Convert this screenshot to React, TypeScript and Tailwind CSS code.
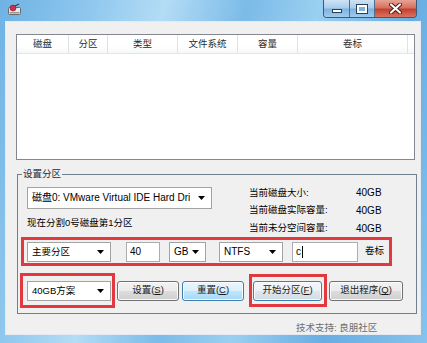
const font = "font-['Liberation_Sans','Noto_Sans_CJK_SC',sans-serif]"

function Arrow() {
  return (
    <svg width="7" height="4" viewBox="0 0 7 4" className="shrink-0">
      <polygon points="0,0 7,0 3.5,4" fill="#000" />
    </svg>
  )
}

function Combo({ text, className }: { text: string; className: string }) {
  return (
    <div className={`flex items-center justify-between bg-white border border-[#a3a3a3] pl-[4px] pr-[6px] overflow-hidden whitespace-nowrap ${className}`}>
      <span className="leading-none">{text}</span>
      <Arrow />
    </div>
  )
}

function Edit({ children, className }: { children: React.ReactNode; className: string }) {
  return (
    <div className={`flex items-center bg-white border border-[#abadb3] pl-[3px] h-[20px] ${className}`}>
      {children}
    </div>
  )
}

function Btn({ label, k, kind = 'normal', className }: { label: string; k: string; kind?: string; className: string }) {
  const look = {
    normal: 'border-[#707070] bg-[linear-gradient(#f2f2f2_0%,#ebebeb_50%,#dddddd_51%,#cfcfcf_100%)]',
    focus: 'border-[#3c7fb1] bg-[linear-gradient(#eaf6fd_0%,#d9f0fc_50%,#bee6fd_51%,#a7d9f5_100%)]',
    def: 'border-[#3c7fb1] bg-[linear-gradient(#f4f8fb_0%,#ecf1f5_50%,#dfe6ec_51%,#d3dce4_100%)]',
  }[kind]
  return (
    <div className={`flex items-center justify-center h-[20px] rounded-[3px] border shadow-[inset_0_0_0_1px_#fbfbfb] text-[#1a1a1a] ${look} ${className}`}>
      {label}(<u>{k}</u>)
    </div>
  )
}

function Caption() {
  return (
    <div className="flex h-[18px] mr-[10px] rounded-b-[4px] border border-t-0 border-[#3b5a78] overflow-hidden">
      <div className="w-[26px] flex items-end justify-center pb-[4px] border-r border-[#4d6e8e] bg-[linear-gradient(#cfe3f4_0%,#a9cdec_45%,#7fb3df_55%,#9fcbef_100%)]">
        <div className="w-[10px] h-[4px] bg-white border border-[#2d3f55]" />
      </div>
      <div className="w-[25px] flex items-center justify-center border-r border-[#4d6e8e] bg-[linear-gradient(#cfe3f4_0%,#a9cdec_45%,#7fb3df_55%,#9fcbef_100%)]">
        <div className="w-[10px] h-[8px] border-[2px] border-white outline outline-1 outline-[#2d3f55] bg-[#7fb3df]" />
      </div>
      <div className="w-[41px] flex items-center justify-center bg-[linear-gradient(#e8a395_0%,#d7715f_45%,#c2412f_55%,#d9735f_100%)]">
        <svg width="13" height="11" viewBox="0 0 13 11">
          <path d="M2 1.5 L11 9.5 M11 1.5 L2 9.5" stroke="#4a1a14" strokeWidth="4" strokeLinecap="round" />
          <path d="M2 1.5 L11 9.5 M11 1.5 L2 9.5" stroke="#fff" strokeWidth="2.2" strokeLinecap="round" />
        </svg>
      </div>
    </div>
  )
}

const columns = [
  { t: '磁盘', w: 'w-[52px]' },
  { t: '分区', w: 'w-[39px]' },
  { t: '类型', w: 'w-[70px]' },
  { t: '文件系统', w: 'w-[60px]' },
  { t: '容量', w: 'w-[60px]' },
  { t: '卷标', w: 'w-[110px]' },
]

const info = [
  ['当前磁盘大小:', '40GB'],
  ['当前磁盘实际容量:', '40GB'],
  ['当前未分空间容量:', '40GB'],
]

export default function App() {
  return (
    <div className={`w-[427px] h-[343px] flex flex-col overflow-hidden text-[9.5px] text-black ${font} bg-[linear-gradient(105deg,#6eb2e4_0%,#8fc8ee_18%,#b4dcf5_32%,#7bbbe8_48%,#9ad0f1_62%,#69ade2_80%,#86c2ec_100%)]`}>
      {/* title bar */}
      <div className="h-[21px] flex items-start justify-between shrink-0">
        <div className="ml-[8px] mt-[3px]">
          <svg width="13" height="13" viewBox="0 0 13 13">
            <rect x="0.5" y="4.5" width="12" height="7" rx="1" fill="#e8e8e8" stroke="#6a6a6a" />
            <rect x="1.5" y="9" width="10" height="1.5" fill="#9a9a9a" />
            <circle cx="5" cy="5" r="3" fill="#c8324a" stroke="#7a1a28" strokeWidth="0.6" />
            <path d="M7 3 L11 1" stroke="#3a3a3a" strokeWidth="1.2" />
          </svg>
        </div>
        <Caption />
      </div>

      {/* client area */}
      <div className="flex-1 ml-[5px] mr-[6px] mb-[8px] bg-[#f0f0f0] border border-[#e4eaf0] flex flex-col">
        {/* list view */}
        <div className="mt-[12px] ml-[10px] w-[399px] h-[126px] bg-white border border-[#828790] flex flex-col">
          <div className="h-[19px] flex border-b border-[#e5e5e5] bg-[linear-gradient(#ffffff_0%,#ffffff_60%,#f5f7f9_100%)] text-[#2b2b2b]">
            {columns.map(c => (
              <div key={c.t} className={`${c.w} shrink-0 flex items-center justify-center border-r border-[#dfe3e8]`}>
                {c.t}
              </div>
            ))}
          </div>
        </div>

        {/* group box */}
        <div className="relative mt-[14px] ml-[11px] w-[400px] h-[140px] border border-[#6f7f8c] flex flex-col">
          <div className="absolute left-[4px] top-[-7px] px-[1px] bg-[#f0f0f0] leading-[12px] text-[#1a2a3a]">设置分区</div>

          <div className="mt-[9px] ml-[9px] h-[53px] flex">
            <div className="w-[185px] flex flex-col">
              <Combo text="磁盘0: VMware Virtual IDE Hard Dri" className="mt-[3px] h-[22px] w-[185px] text-[10px]" />
              <div className="mt-[8px] leading-[12px]">现在分割0号磁盘第1分区</div>
            </div>
            <div className="ml-[37px] flex flex-col">
              {info.map(([a, b]) => (
                <div key={a} className="h-[18px] flex items-center">
                  <span className="w-[107px]">{a}</span>
                  <span className="text-[10px]">{b}</span>
                </div>
              ))}
            </div>
          </div>

          {/* partition row */}
          <div className="ml-[3px] w-[371px] h-[29px] border-[3px] border-[#e2393f] flex items-center pl-[3px]">
            <Combo text="主要分区" className="w-[84px] h-[20px]" />
            <Edit className="ml-[15px] w-[34px] text-[10px]">40</Edit>
            <Combo text="GB" className="ml-[9px] w-[37px] h-[20px] text-[10px]" />
            <Combo text="NTFS" className="ml-[13px] w-[64px] h-[20px] text-[10px]" />
            <Edit className="ml-[9px] w-[66px] text-[10px]">
              c<span className="w-px h-[12px] bg-black ml-[1px]" />
            </Edit>
            <span className="ml-[7px]">卷标</span>
          </div>

          {/* button row */}
          <div className="mt-[7px] ml-[2px] flex items-center">
            <div className="w-[95px] h-[35px] border-[3px] border-[#e2393f] flex items-center pl-[4px]">
              <Combo text="40GB方案" className="w-[84px] h-[20px]" />
            </div>
            <Btn label="设置" k="S" className="ml-[2px] w-[62px]" />
            <Btn label="重置" k="C" kind="focus" className="ml-[3px] w-[62px]" />
            <div className="ml-[5px] w-[78px] h-[33px] border-[3px] border-[#e2393f] flex items-center pl-[1px]">
              <Btn label="开始分区" k="F" kind="def" className="w-[69px]" />
            </div>
            <Btn label="退出程序" k="Q" className="ml-[2px] w-[74px]" />
          </div>
        </div>

        <div className="mt-[8px] ml-[290px] leading-[12px] text-[#6d6d6d]">技术支持: 良朋社区</div>
      </div>
    </div>
  )
}
